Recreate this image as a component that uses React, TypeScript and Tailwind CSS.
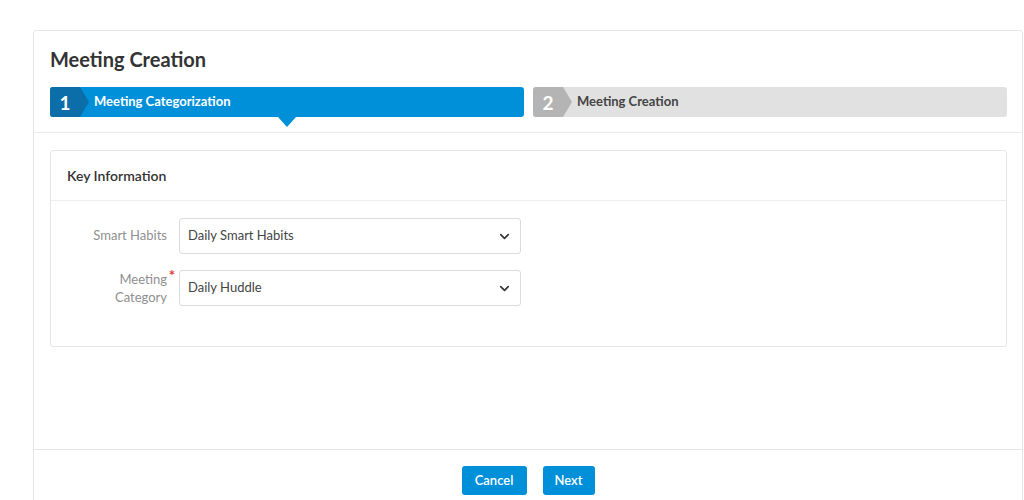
import React from "react";
import { ChevronDown } from "lucide-react";

const FONT = "font-['Lato','Open_Sans',sans-serif]";

type StepProps = { num: number; label: string; active?: boolean };

const Step = ({ num, label, active }: StepProps) => {
  return (
    <div
      className={`relative flex-1 h-[30px] rounded-[3px] flex items-center ${
        active ? "bg-[#0090da]" : "bg-[#e1e1e1]"
      }`}
    >
      <div
        className={`absolute left-0 top-0 h-full w-[40px] rounded-l-[3px] [clip-path:polygon(0_0,30px_0,39px_50%,30px_100%,0_100%)] ${
          active ? "bg-[#0b6ea8]" : "bg-[#b4b4b4]"
        }`}
      />
      <span className="relative w-[30px] text-center text-[19px] font-bold text-white leading-none">
        {num}
      </span>
      <span
        className={`relative ml-[14px] text-[13px] font-bold ${
          active ? "text-white" : "text-[#444]"
        }`}
      >
        {label}
      </span>
      {active && (
        <div className="absolute left-1/2 top-full -translate-x-1/2 w-0 h-0 border-l-[9px] border-r-[9px] border-t-[10px] border-l-transparent border-r-transparent border-t-[#0090da]" />
      )}
    </div>
  );
};

const SelectBox = ({ value }: { value: string }) => {
  return (
    <div className="w-[342px] h-[36px] border border-[#dcdcdc] rounded-[3px] bg-white flex items-center justify-between pl-[8px] pr-[8px] text-[13px] text-[#444]">
      <span>{value}</span>
      <ChevronDown size={15} strokeWidth={2.6} className="text-[#333]" />
    </div>
  );
};

export default function App() {
  return (
    <div className={`w-[1024px] h-[500px] bg-white overflow-hidden ${FONT}`}>
      <div className="ml-[33px] mt-[30px] w-[990px] border border-[#e6e6e6] rounded-t-[3px] bg-white">
        <div className="pl-[16px] pr-[15px] pt-[15px] pb-[15px] border-b border-[#eaeaea]">
          <h1 className="text-[20px] font-bold text-[#333] leading-[26px] mb-[15px]">
            Meeting Creation
          </h1>
          <div className="flex gap-[9px]">
            <Step num={1} label="Meeting Categorization" active />
            <Step num={2} label="Meeting Creation" />
          </div>
        </div>

        <div className="h-[316px] pl-[16px] pr-[15px] pt-[17px]">
          <div className="border border-[#e6e6e6] rounded-[3px]">
            <div className="h-[50px] flex items-center px-[16px] border-b border-[#eeeeee] text-[14px] font-semibold text-[#333]">
              Key Information
            </div>
            <div className="pt-[17px] pb-[40px] flex flex-col gap-[16px]">
              <div className="flex items-center">
                <div className="w-[128px] pr-[12px] text-right text-[13px] text-[#8f8f8f]">
                  Smart Habits
                </div>
                <SelectBox value="Daily Smart Habits" />
              </div>
              <div className="flex items-center">
                <div className="w-[128px] pr-[12px] text-right text-[13px] text-[#8f8f8f] leading-[18px]">
                  <div className="relative inline-block">
                    Meeting
                    <span className="absolute -right-[8px] -top-[4px] text-[15px] font-bold text-[#e53935]">*</span>
                  </div>
                  <div>Category</div>
                </div>
                <SelectBox value="Daily Huddle" />
              </div>
            </div>
          </div>
        </div>

        <div className="border-t border-[#e6e6e6] pt-[16px] pb-[20px] flex justify-center gap-[16px]">
          <button className="w-[65px] h-[29px] rounded-[3px] bg-[#0090da] text-white text-[13px] font-semibold">
            Cancel
          </button>
          <button className="w-[52px] h-[29px] rounded-[3px] bg-[#0090da] text-white text-[13px] font-semibold">
            Next
          </button>
        </div>
      </div>
    </div>
  );
}
